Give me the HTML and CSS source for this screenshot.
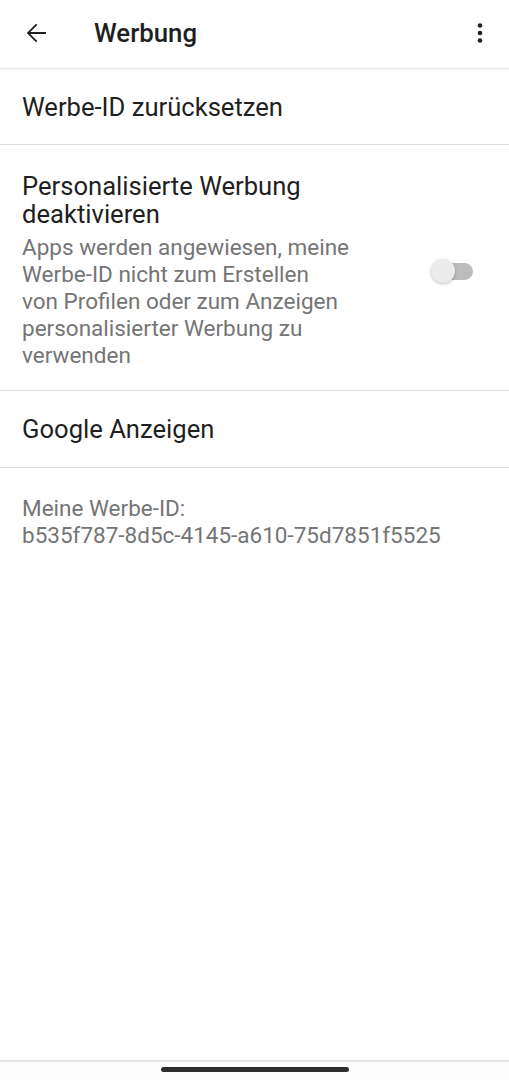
FILE: index.html
```html
<!DOCTYPE html>
<html>
<head>
    <title>Werbung</title>
    <link rel="stylesheet" href="styles.css">
</head>
<body>
    <div class="screen">
        <div class="toolbar">
            <span class="nav-icon">
                <svg width="30" height="30" viewBox="0 0 24 24"><path d="M20 11.2H7.4l5.6-5.6L12 4.6 4.6 12l7.4 7.4 1-1-5.6-5.6H20z" fill="#1f1f1f"/></svg>
            </span>
            <h1 class="toolbar-title">Werbung</h1>
            <span class="menu-icon">
                <svg width="24" height="24" viewBox="0 0 24 24"><circle cx="12" cy="4.5" r="2.3" fill="#1f1f1f"/><circle cx="12" cy="12" r="2.3" fill="#1f1f1f"/><circle cx="12" cy="19.5" r="2.3" fill="#1f1f1f"/></svg>
            </span>
        </div>

        <div class="pref pref-single">
            <div class="pref-title">Werbe-ID zurücksetzen</div>
        </div>

        <div class="pref pref-switch">
            <div class="pref-text">
                <div class="pref-title">Personalisierte Werbung deaktivieren</div>
                <div class="pref-summary">Apps werden angewiesen, meine Werbe-ID nicht zum Erstellen von Profilen oder zum Anzeigen personalisierter Werbung zu verwenden</div>
            </div>
            <div class="switch">
                <span class="switch-track"></span>
                <span class="switch-thumb"></span>
            </div>
        </div>

        <div class="pref pref-single pref-last">
            <div class="pref-title">Google Anzeigen</div>
        </div>

        <div class="ad-id">
            Meine Werbe-ID:<br>
            b535f787-8d5c-4145-a610-75d7851f5525
        </div>
    </div>

    <div class="nav-bar">
        <span class="nav-handle"></span>
    </div>
</body>
</html>
```

FILE: styles.css
```css
body {
    margin: 0;
    font-family: Roboto, "Noto Sans", sans-serif;
    background: #fff;
    color: #1f1f1f;
    width: 509px;
    height: 1080px;
    overflow: hidden;
    display: flex;
    flex-direction: column;
}
.screen {
    flex: 1;
}
.toolbar {
    height: 69px;
    box-sizing: border-box;
    padding-bottom: 3px;
    display: flex;
    align-items: center;
    border-bottom: 1px solid #e6e6e6;
    box-shadow: 0 1px 2px rgba(0,0,0,0.06);
}
.nav-icon {
    width: 30px;
    height: 30px;
    margin-left: 21px;
    margin-right: 43px;
}
.toolbar-title {
    flex: 1;
    margin: 0;
    font-size: 25.8px;
    font-weight: 500;
    color: #1f1f1f;
}
.menu-icon {
    width: 24px;
    height: 24px;
    margin-right: 17px;
}
.pref {
    border-bottom: 1px solid #dcdcdc;
    padding: 0 22px;
}
.pref-single {
    height: 75px;
    display: flex;
    align-items: center;
}
.pref-last {
    height: 76px;
}
.pref-title {
    font-size: 25.6px;
    line-height: 28px;
    color: #1f1f1f;
}
.pref-switch {
    display: flex;
    align-items: center;
    padding-top: 27px;
    padding-bottom: 21px;
}
.pref-text {
    width: 328px;
}
.pref-summary {
    font-size: 22.5px;
    line-height: 27px;
    color: #757575;
    margin-top: 6px;
}
.switch {
    position: relative;
    width: 42px;
    height: 26px;
    margin-left: auto;
    margin-right: 14px;
}
.switch-track {
    position: absolute;
    left: 6px;
    top: 5px;
    width: 36px;
    height: 17px;
    border-radius: 9px;
    background: #bcbcbc;
}
.switch-thumb {
    position: absolute;
    left: 0;
    top: 1px;
    width: 24px;
    height: 24px;
    border-radius: 50%;
    background: #ececec;
    box-shadow: 0 1px 3px rgba(0,0,0,0.25);
}
.ad-id {
    padding: 27px 22px;
    font-size: 22.5px;
    line-height: 27px;
    color: #757575;
}
.nav-bar {
    height: 20px;
    border-top: 2px solid #e6e6e6;
    display: flex;
    justify-content: center;
    padding-top: 5px;
    box-sizing: border-box;
    background: #fdfdfd;
}
.nav-handle {
    width: 188px;
    height: 5px;
    border-radius: 3px;
    background: #2e2e2e;
}
```
